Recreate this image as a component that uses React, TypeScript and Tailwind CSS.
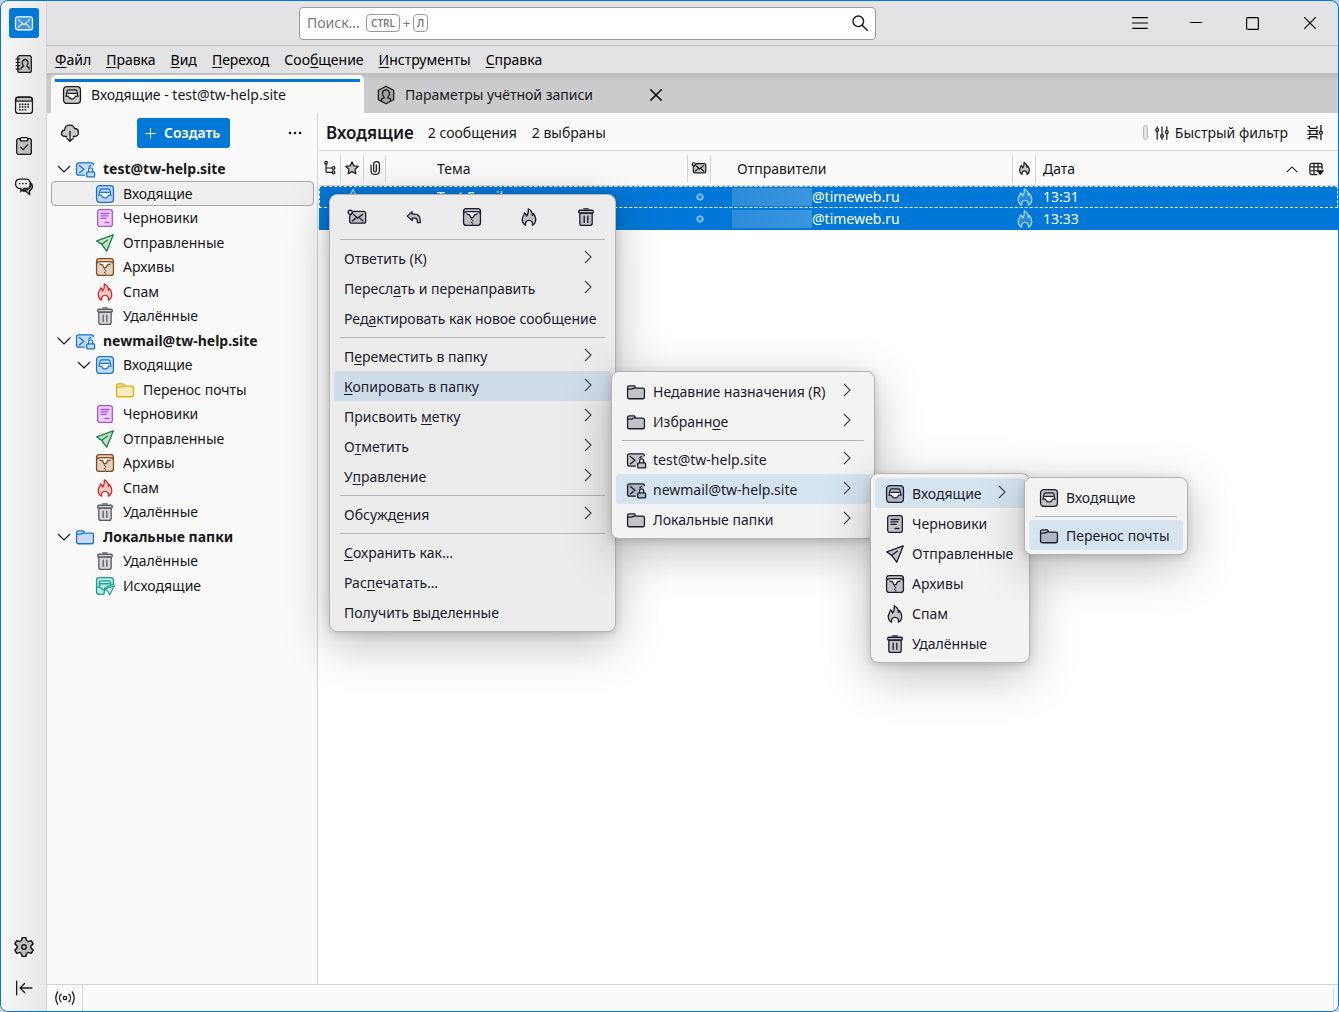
import type { ReactNode } from "react";

type IconName =
    | "inbox"
    | "drafts"
    | "sent"
    | "archive"
    | "spam"
    | "trash"
    | "folder"
    | "account"
    | "outbox"
    | "mail"
    | "unread"
    | "reply"
    | "addressBook"
    | "calendar"
    | "tasks"
    | "chat"
    | "settings"
    | "collapse"
    | "cloud"
    | "accountSettings"
    | "search"
    | "thread"
    | "star"
    | "attachment"
    | "filter"
    | "display"
    | "columns"
    | "sync";

// Shapes are drawn on a 16px grid, "tint" is the translucent body of the icon
const tint = { fill: "currentColor", fillOpacity: 0.22 };

const shapes: Record<IconName, ReactNode> = {
    inbox: (
        <>
            <rect x="0.5" y="0.5" width="15" height="15" rx="3" {...tint} />
            <path
                d="M3.5 7h9v2h-1.300c-.8 0-.9 2.300-2.200 2.300H7c-1.300 0-1.400-2.300-2.200-2.300H3.500z"
                fill="#fff"
                stroke="none"
            />
            <path
                d="M2.500 9h2c.8 0 1 2.500 2.500 2.500h2c1.500 0 1.700-2.500 2.500-2.500h2M3 8l.5-3c.1-.9.600-1.500 1.500-1.500h6c.9 0 1.400.6 1.500 1.500l.5 3M4.500 6.500h7"
                fill="none"
            />
        </>
    ),
    drafts: (
        <>
            <rect x="1.5" y="0.5" width="13" height="15" rx="2" {...tint} />
            <path d="M4.500 4h7M4.500 6.200h6M4.500 8.400h4.500M8 12h3.500" />
        </>
    ),
    sent: (
        <>
            <path
                d="M15.300.8L.7 6.200l4.500 3L9.500 15.300z"
                strokeLinejoin="round"
                {...tint}
            />
            <path d="M5.200 9.200l5-3.800" fill="none" />
        </>
    ),
    archive: (
        <>
            <rect x="0.5" y="0.5" width="15" height="15" rx="2.5" {...tint} />
            <path d="M3 4h10l-2.500 2L9 8.500H7L5.500 6z" fill="#fff" stroke="none" />
            <path
                d="M.5 5C1 3.500 2 3.200 3.500 3.200h9c1.500 0 2.500.3 3 1.800M3.500 5.500l2.300.5L7 8.500h2L10.200 6l2.300-.5"
                fill="none"
            />
            <path d="M7.500 10h.2M8.500 11.400h.2M7.500 12.800h.2M8.500 14.200h.2" />
        </>
    ),
    spam: (
        <path
            d="M5 15.300C3.200 14.300 2 12.500 2 10.200c0-2.400 1.600-3.700 2-5.900 1.200.7 1.700 1.700 1.800 2.900C7.300 5.500 7.600 2.800 7.400.7c2.700 1.300 3.600 3.500 3.600 5.900.5-.4.800-1 .9-1.800 1.300 1.500 2.100 3.500 2.100 5.400 0 2.300-1.200 4.100-3 5.100.5-2.400-.4-4.300-3-4.300s-3.500 1.900-3 4.300z"
            strokeLinejoin="round"
            {...tint}
        />
    ),
    trash: (
        <>
            <path d="M2.500 4.500v9c0 1.200.8 2 2 2h7c1.200 0 2-.8 2-2v-9z" {...tint} />
            <rect x="1.500" y="2" width="13" height="2.500" rx="1" {...tint} />
            <path d="M6 .8h4M6.400 7.300v5.500M9.600 7.300v5.500" />
        </>
    ),
    folder: (
        <>
            <path
                d="M.5 4.200c0-1.200.6-1.700 1.600-1.700h4.300l1.700 2h5.700c1.200 0 1.700.6 1.700 1.700v6c0 1.200-.6 1.800-1.700 1.800H2.200c-1.100 0-1.700-.6-1.700-1.800z"
                {...tint}
            />
            <path d="M.5 5.500H4l3-1.200" fill="none" />
        </>
    ),
    account: (
        <>
            <path
                d="M8 13.500H2.200c-1.100 0-1.700-.6-1.700-1.700V4.200c0-1.100.6-1.700 1.700-1.700h11.600c1.100 0 1.700.6 1.700 1.700V6h-3L10 8.500z"
                fill="currentColor"
                fillOpacity="0.22"
                stroke="none"
            />
            <path
                d="M7.500 13.500H2.200c-1.100 0-1.700-.6-1.700-1.700V4.200c0-1.100.6-1.700 1.700-1.700h11.600c1.100 0 1.700.6 1.700 1.700M3 4.800L7 8.300 3 11.500M13 4.800l-1.500 1.300"
                fill="none"
            />
            <rect x="9.500" y="10.500" width="7" height="4.500" rx="0.8" {...tint} />
            <path d="M11.200 10.500V8.800c0-2.300 3.600-2.300 3.600 0v1.700" fill="none" />
        </>
    ),
    outbox: (
        <>
            <path
                d="M7 15.500H3C1.500 15.500.5 14.500.5 13V3C.5 1.500 1.500.5 3 .5h10c1.500 0 2.500 1 2.500 2.500v3.500L8 9.500z"
                {...tint}
            />
            <path
                d="M3 8V5c0-1 .5-1.500 1.500-1.500h7C12.500 3.500 13 4 13 5v1.500M4 6h8M.5 9h3c.8 0 1 2.500 3.500 2.500"
                fill="none"
            />
            <path d="M16.300 7.800l-8.500 3 2.700 1.700 1.700 3.200z" fill="#fff" />
        </>
    ),
    mail: (
        <>
            <rect x="0.5" y="2.5" width="15" height="11.500" rx="1.800" {...tint} />
            <path d="M3 5l5 4.500L13 5M3 11.800L6 9M13 11.800L10 9" fill="none" />
        </>
    ),
    unread: (
        <>
            <path
                d="M5 3h9c1.100 0 1.700.6 1.700 1.700v7.100c0 1.100-.6 1.700-1.700 1.700H3.200c-1.100 0-1.700-.6-1.700-1.700V7z"
                {...tint}
            />
            <path d="M5 5.800L8.700 9 13 5.500M3.800 11.500L7 9M13.300 11.500L10.500 9" fill="none" />
            <circle cx="2" cy="3.800" r="1.800" fill="none" />
        </>
    ),
    reply: (
        <path
            d="M6.300 3.200L2 7.200l4.300 4V9h2.200C10.200 9 11 10 11 11.500V13h2.500v-2c0-3.200-1.700-5.500-5-5.500H6.300z"
            strokeLinejoin="round"
            {...tint}
        />
    ),
    addressBook: (
        <>
            <rect x="2.500" y="0.5" width="12" height="15" rx="1.800" {...tint} />
            <path d="M1 3.500h3M1 6.500h3M1 9.500h3M1 12.500h3" />
            <path
                d="M5.500 12.500v-1.200l2-1.300C5.500 7 6.500 4 9 4s3.500 3 1.500 6l2 1.300v1.200"
                fill="none"
            />
        </>
    ),
    calendar: (
        <>
            <rect x="0.5" y="1" width="15" height="14.500" rx="2.500" fill="none" />
            <path d="M.5 4.500C.5 2 1.500 1 3 1h10c1.500 0 2.500 1 2.500 3.500z" {...tint} />
            <path
                d="M3.500 7.500h9M3.500 9.800h9M3.500 12.200h6.500"
                strokeDasharray="1.5 1"
                strokeWidth="1.5"
                strokeLinecap="butt"
            />
        </>
    ),
    tasks: (
        <>
            <rect x="1.500" y="1.500" width="13" height="14" rx="1.800" {...tint} />
            <path d="M4.500 1.500l.5 2h6l.5-2-1-1h-5z" fill="#eee" />
            <path d="M5 9l2.200 2.200L11.200 7" fill="none" />
        </>
    ),
    chat: (
        <>
            <path
                d="M13.500 4c1.200.7 2 1.800 2 3.300 0 1.900-1 3.200-2.500 3.900v3.300l-3.500-2.800h-2L5 10.500h5c2.500 0 4-2 4-4z"
                {...tint}
            />
            <path
                d="M4.500 1h5c2.500 0 4 1.700 4 4s-1.500 4.300-4 4.300H8l-2.800 2.500V9.300C2 9.300.5 7.500.5 5S2 1 4.500 1z"
                fill="#f0f0f0"
            />
            <path d="M3.800 5h.5M6.700 5h.5M9.600 5h.5" />
        </>
    ),
    settings: (
        <>
            <path
                d="M6.500.5h3l.5 2.300 1.500.9 2.300-.8 1.500 2.600-1.700 1.600v1.800l1.700 1.600-1.500 2.600-2.300-.8-1.500.9-.5 2.300h-3L6 13.200l-1.500-.9-2.300.8L.7 10.500l1.700-1.600V7.100L.7 5.500l1.500-2.600 2.300.8L6 2.800z"
                strokeLinejoin="round"
                {...tint}
            />
            <circle cx="8" cy="8" r="1.800" fill="none" />
        </>
    ),
    collapse: <path d="M1.500 2v12M15 8H4.500M8.500 4l-4 4 4 4" fill="none" />,
    cloud: (
        <>
            <path
                d="M6 11H3.500c-1.700 0-3-1.200-3-2.800 0-1.600 1.100-2.700 2.700-2.800C3.400 2.800 5.300 1 7.800 1c2.200 0 3.800 1.200 4.400 3 2 0 3.300 1.500 3.300 3.500S14 11 12.500 11H10z"
                fill="currentColor"
                fillOpacity="0.22"
                stroke="none"
            />
            <path
                d="M5 11H3.500c-1.700 0-3-1.200-3-2.800 0-1.600 1.100-2.700 2.700-2.800C3.400 2.800 5.300 1 7.800 1c2.200 0 3.800 1.200 4.400 3 2 0 3.300 1.500 3.300 3.500S14 11 12.500 11H11"
                fill="none"
            />
            <path d="M8 6.500v8.800M5 12.300l3 3 3-3" fill="none" />
        </>
    ),
    accountSettings: (
        <>
            <path
                d="M8 .2l6.800 3.600v8.400L8 15.800l-6.800-3.600V3.800z"
                strokeLinejoin="round"
                {...tint}
            />
            <path
                d="M4 13v-1.500l2.500-1C3.500 7 5 3.500 8 3.500s4.500 3.500 1.500 7l2.500 1V13"
                fill="none"
            />
        </>
    ),
    search: (
        <>
            <circle cx="6.300" cy="6.300" r="5.300" fill="none" />
            <path d="M10.200 10.200l5 5" />
        </>
    ),
    thread: (
        <>
            <path d="M3.500 3.500V11c0 1.300.7 2 2 2H10M3.500 8H10" fill="none" />
            <circle cx="3.500" cy="2" r="1.500" fill="none" />
            <circle cx="12" cy="8" r="1.600" fill="none" />
            <circle cx="12" cy="13" r="1.600" fill="none" />
        </>
    ),
    star: (
        <path
            d="M8 1l2.100 4.600 5 .6-3.700 3.400 1 4.900L8 12.100l-4.400 2.400 1-4.900L.9 6.200l5-.6z"
            strokeLinejoin="round"
            {...tint}
        />
    ),
    attachment: (
        <path
            d="M9.500 4.500v6.300c0 2.300-3 2.300-3 0V3.500c0-3.700 6.500-3.700 6.500 0v7.800c0 5.300-9.500 5.300-9.500 0V5"
            fill="none"
        />
    ),
    filter: (
        <>
            <path d="M2.500 1v1.500M2.500 7v8M8 1v8.500M8 13.500V15M13.500 1v4M13.500 9v6" />
            <circle cx="2.500" cy="4.700" r="1.600" fill="none" />
            <circle cx="8" cy="11.500" r="1.600" fill="none" />
            <circle cx="13.500" cy="7" r="1.600" fill="none" />
        </>
    ),
    display: (
        <>
            <path
                d="M0 1.500h1.500v1.200c0 .5.300.8.800.8h6.400c.5 0 .8-.3.8-.8V1.500M0 14.500h1.500v-1.200c0-.5.300-.8.800-.8h6.400c.5 0 .8.300.8.8v1.200"
                fill="none"
            />
            <path d="M0 6h10.500M0 10h10.500M2 6v4M9.500 6v4M13.800.5V6M13.800 10.500V15.500" />
            <circle cx="13.800" cy="8.300" r="1.600" fill="none" />
        </>
    ),
    columns: (
        <>
            <path
                d="M9 14.500H3.500c-1.500 0-2.500-1-2.500-2.500V4c0-1.500 1-2.500 2.500-2.500h9C14 1.500 15 2.500 15 4v4M1 5.500h14M5.700 1.500v13M10.300 1.500v7.500M1 10h8"
                fill="none"
            />
            <path d="M9.500 10H16l-3.200 4z" fill="currentColor" />
        </>
    ),
    sync: (
        <>
            <circle cx="8" cy="8" r="1.500" fill="none" />
            <path
                d="M4.500 4.500c-1.800 2-1.800 5 0 7M11.500 4.500c1.800 2 1.800 5 0 7M1.500 2.500c-2 3.300-2 7.700 0 11M14.500 2.500c2 3.300 2 7.700 0 11"
                fill="none"
            />
        </>
    ),
};

const Icon = ({
    name,
    className = "size-[18px] stroke-[1.15]",
}: {
    name: IconName;
    className?: string;
}) => (
    <svg
        viewBox="0 0 16 16"
        className={`shrink-0 overflow-visible ${className}`}
        stroke="currentColor"
        strokeLinecap="round"
        aria-hidden="true"
    >
        {shapes[name]}
    </svg>
);

const Chevron = ({ className }: { className: string }) => (
    <svg
        viewBox="0 0 14 8"
        className={`h-2 w-3.5 shrink-0 ${className}`}
        fill="none"
        stroke="currentColor"
        strokeWidth="1.2"
        aria-hidden="true"
    >
        <path d="M1 1l6 6 6-6" />
    </svg>
);

// "&" stands before the letter that works as the access key
const Label = ({ text }: { text: string }) => {
    const [before, after] = text.split("&");
    if (after === undefined) return <span>{before}</span>;
    return (
        <span className="underline-offset-2">
            {before}
            <u>{after[0]}</u>
            {after.slice(1)}
        </span>
    );
};

const menuBar = [
    "&Файл",
    "&Правка",
    "&Вид",
    "&Переход",
    "Соо&бщение",
    "&Инструменты",
    "&Справка",
];

const spaces: { icon: IconName; name: string }[] = [
    { icon: "mail", name: "Почта" },
    { icon: "addressBook", name: "Адресная книга" },
    { icon: "calendar", name: "Календарь" },
    { icon: "tasks", name: "Задачи" },
    { icon: "chat", name: "Чат" },
];

const SpacesBar = () => (
    <nav className="flex w-[46px] shrink-0 flex-col items-center justify-between border-r border-[#d4d4d8] bg-linear-to-r from-[#f6f6f6] to-[#e8e8e8] pt-[7px] pb-2">
        <div className="flex flex-col gap-[11px]">
            {spaces.map((space, i) => (
                <button
                    key={space.name}
                    aria-label={space.name}
                    className={`flex size-[30px] items-center justify-center rounded-[3px] ${
                        i === 0 ? "bg-[#0078d7] text-white" : "text-[#18181b]"
                    }`}
                >
                    <Icon name={space.icon} />
                </button>
            ))}
        </div>
        <div className="flex flex-col gap-[11px] text-[#18181b]">
            <button
                aria-label="Настройки"
                className="flex size-[30px] items-center justify-center"
            >
                <Icon name="settings" className="size-5 stroke-[1.15]" />
            </button>
            <button
                aria-label="Свернуть панель"
                className="flex size-[30px] items-center justify-center"
            >
                <Icon name="collapse" />
            </button>
        </div>
    </nav>
);

const TitleBar = () => (
    <header className="flex h-[45px] shrink-0 border-b border-[#c2c2c6]">
        <div className="flex flex-1 items-center justify-center">
            <div className="flex h-[33px] w-[577px] items-center rounded-[4px] border border-[#9a9a9e] bg-white px-[7px] text-[#7a7a7e]">
                <input
                    type="text"
                    aria-label="Поиск"
                    placeholder="Поиск..."
                    className="w-[59px] outline-none placeholder:text-[#7a7a7e]"
                />
                <kbd className="flex h-[18px] w-[34px] items-center justify-center rounded-[4px] border border-[#9a9a9e] font-[inherit] text-[10px] font-semibold">
                    CTRL
                </kbd>
                <span className="w-[13px] text-center text-[13px]">+</span>
                <kbd className="flex h-[18px] w-[15px] items-center justify-center rounded-[4px] border border-[#9a9a9e] font-[inherit] text-[10px] font-semibold">
                    Л
                </kbd>
                <button aria-label="Найти" className="ml-auto text-[#18181b]">
                    <Icon name="search" className="size-4 stroke-[1.4]" />
                </button>
            </div>
        </div>
        <div className="flex items-center text-black">
            <button
                aria-label="Меню"
                className="mr-[15px] flex size-6 items-center justify-center"
            >
                <svg
                    viewBox="0 0 16 12"
                    className="h-3 w-4"
                    stroke="currentColor"
                    strokeWidth="1.2"
                >
                    <path d="M0 .6h16M0 6h16M0 11.400h16" />
                </svg>
            </button>
            <button
                aria-label="Свернуть"
                className="flex h-full w-[57px] items-center justify-center"
            >
                <svg viewBox="0 0 12 12" className="size-3" stroke="currentColor">
                    <path d="M0 5.500h12" />
                </svg>
            </button>
            <button
                aria-label="Развернуть"
                className="flex h-full w-[57px] items-center justify-center"
            >
                <svg
                    viewBox="0 0 13 13"
                    className="size-[13px]"
                    stroke="currentColor"
                    strokeWidth="1.2"
                >
                    <rect x="0.6" y="0.6" width="11.800" height="11.800" rx="1" fill="none" />
                </svg>
            </button>
            <button
                aria-label="Закрыть"
                className="flex h-full w-[57px] items-center justify-center"
            >
                <svg
                    viewBox="0 0 12 12"
                    className="size-3"
                    stroke="currentColor"
                    strokeWidth="1.2"
                >
                    <path d="M0 0l12 12M12 0L0 12" />
                </svg>
            </button>
        </div>
    </header>
);

const TabBar = () => (
    <div className="flex h-10 shrink-0 items-end bg-linear-to-b from-[#bdbdc0] via-[#cbcbcd] via-20% to-[#cbcbcd] pl-1">
        <button className="flex h-[38px] w-[313px] flex-col rounded-t-[5px] bg-[#fafafa] px-1 pt-1">
            <span className="h-[3px] w-full bg-[#0078d7]" />
            <span className="flex flex-1 items-center gap-2.5 pb-1.5 pl-2 text-[#18181b]">
                <Icon name="inbox" />
                Входящие - test@tw-help.site
            </span>
        </button>
        <div className="flex h-[38px] w-[313px] items-center gap-2.5 pt-px pl-[13px] text-[#18181b]">
            <Icon name="accountSettings" />
            <button>Параметры учётной записи</button>
            <button aria-label="Закрыть вкладку" className="mr-[15px] ml-auto">
                <svg
                    viewBox="0 0 12 12"
                    className="size-3"
                    stroke="currentColor"
                    strokeWidth="1.6"
                >
                    <path d="M0 0l12 12M12 0L0 12" />
                </svg>
            </button>
        </div>
    </div>
);

interface FolderProps {
    name: string;
    icon: IconName;
    color: string;
    level?: number;
    open?: boolean;
    selected?: boolean;
}

const folders: FolderProps[] = [
    { name: "test@tw-help.site", icon: "account", color: "text-[#1373d9]", level: 0, open: true },
    { name: "Входящие", icon: "inbox", color: "text-[#1373d9]", selected: true },
    { name: "Черновики", icon: "drafts", color: "text-[#b44ae8]" },
    { name: "Отправленные", icon: "sent", color: "text-[#16803c]" },
    { name: "Архивы", icon: "archive", color: "text-[#8a4b16]" },
    { name: "Спам", icon: "spam", color: "text-[#dc2626]" },
    { name: "Удалённые", icon: "trash", color: "text-[#5b5b66]" },
    { name: "newmail@tw-help.site", icon: "account", color: "text-[#1373d9]", level: 0, open: true },
    { name: "Входящие", icon: "inbox", color: "text-[#1373d9]", open: true },
    { name: "Перенос почты", icon: "folder", color: "text-[#e0b000]", level: 2 },
    { name: "Черновики", icon: "drafts", color: "text-[#b44ae8]" },
    { name: "Отправленные", icon: "sent", color: "text-[#16803c]" },
    { name: "Архивы", icon: "archive", color: "text-[#8a4b16]" },
    { name: "Спам", icon: "spam", color: "text-[#dc2626]" },
    { name: "Удалённые", icon: "trash", color: "text-[#5b5b66]" },
    { name: "Локальные папки", icon: "folder", color: "text-[#1373d9]", level: 0, open: true },
    { name: "Удалённые", icon: "trash", color: "text-[#5b5b66]" },
    { name: "Исходящие", icon: "outbox", color: "text-[#12a594]" },
];

const indents = ["pl-[5px]", "pl-[25px]", "pl-[45px]"];

const FolderRow = ({ name, icon, color, level = 1, open, selected }: FolderProps) => (
    <li
        className={`flex h-6 items-center rounded-[4px] border even:h-[25px] ${indents[level]} ${
            selected ? "border-[#a8a8ac] bg-[#efefef]" : "border-transparent"
        } ${level === 0 ? "font-bold" : ""}`}
    >
        <span className="w-[19px] shrink-0">
            {open && <Chevron className="text-[#18181b]" />}
        </span>
        <span className={`flex ${color}`}>
            <Icon name={icon} />
        </span>
        <span className="pl-[9px] whitespace-nowrap">{name}</span>
    </li>
);

const FolderPane = () => (
    <aside className="flex w-[271px] shrink-0 flex-col border-r border-[#d4d4d8] bg-[#fafafa] pr-[3px] pl-1 text-[#18181b]">
        <div className="flex h-10 items-center justify-between pr-3 pl-2.5">
            <button aria-label="Получить почту">
                <Icon name="cloud" />
            </button>
            <button className="flex h-[30px] w-[93px] items-center gap-2 rounded-[3px] bg-[#0078d7] pl-2 font-semibold text-white">
                <svg viewBox="0 0 11 11" className="size-[11px]" stroke="currentColor">
                    <path d="M5.500 0v11M0 5.500h11" />
                </svg>
                Создать
            </button>
            <button aria-label="Параметры панели папок">
                <svg viewBox="0 0 14 4" className="h-1 w-3.5" fill="currentColor">
                    <circle cx="2" cy="2" r="1.300" />
                    <circle cx="7" cy="2" r="1.300" />
                    <circle cx="12" cy="2" r="1.300" />
                </svg>
            </button>
        </div>
        <ul className="mt-1">
            {folders.map((folder, i) => (
                <FolderRow key={i} {...folder} />
            ))}
        </ul>
    </aside>
);

const HeadCell = ({ children, className = "" }: { children: ReactNode; className?: string }) => (
    <div
        className={`flex h-[27px] items-center border-r border-[#d4d4d8] ${className}`}
    >
        {children}
    </div>
);

const messages = [
    { subject: "Test Email", sender: "@timeweb.ru", time: "13:31", focused: true },
    { subject: "", sender: "@timeweb.ru", time: "13:33", focused: false },
];

const MessageList = () => (
    <section className="min-w-0 flex-1 bg-white pl-px text-[#18181b]">
        <div className="flex h-[38px] items-center border-b border-[#d4d4d8] bg-[#fafafa] pt-0.5 pr-[15px] pl-[7px]">
            <h1 className="text-[17px] font-semibold">Входящие</h1>
            <span className="pl-3.5">2 сообщения</span>
            <span className="pl-[15px]">2 выбраны</span>
            <span className="mr-[7px] ml-auto h-[15px] w-[5px] rounded-[3px] border border-[#bdbdc0] bg-[#e3e3e5]" />
            <button className="flex items-center gap-1.5">
                <Icon name="filter" className="size-3.5 stroke-[1.4]" />
                Быстрый фильтр
            </button>
            <button aria-label="Вид списка сообщений" className="ml-5">
                <Icon name="display" className="size-[15px] stroke-[1.4]" />
            </button>
        </div>
        <table className="w-full table-fixed border-separate border-spacing-0">
            <colgroup>
                <col className="w-[22px]" />
                <col className="w-[23px]" />
                <col className="w-[22px]" />
                <col />
                <col className="w-[23px]" />
                <col />
                <col className="w-[23px]" />
                <col />
            </colgroup>
            <thead>
                <tr className="h-[35px] bg-[#fafafa] text-left *:border-b *:border-[#d4d4d8] *:p-0 *:font-normal">
                    <th aria-label="Обсуждение">
                        <HeadCell className="justify-center">
                            <Icon name="thread" className="size-3.5 stroke-[1.4]" />
                        </HeadCell>
                    </th>
                    <th aria-label="Отмечено">
                        <HeadCell className="justify-center">
                            <Icon name="star" className="size-3.5 stroke-[1.4]" />
                        </HeadCell>
                    </th>
                    <th aria-label="Вложения">
                        <HeadCell className="justify-center">
                            <Icon name="attachment" className="size-3.5 stroke-[1.4]" />
                        </HeadCell>
                    </th>
                    <th>
                        <HeadCell className="pt-0.5 pl-[51px]">Тема</HeadCell>
                    </th>
                    <th aria-label="Прочитано">
                        <HeadCell className="justify-center">
                            <Icon name="unread" className="size-3.5 stroke-[1.4]" />
                        </HeadCell>
                    </th>
                    <th>
                        <HeadCell className="pt-0.5 pl-[26px]">Отправители</HeadCell>
                    </th>
                    <th aria-label="Спам">
                        <HeadCell className="justify-center">
                            <Icon name="spam" className="size-[13px] stroke-[1.5]" />
                        </HeadCell>
                    </th>
                    <th>
                        <div className="flex items-center pt-0.5 pr-[15px] pl-[7px]">
                            Дата
                            <Chevron className="mr-2.5 ml-auto h-[7px] w-3 rotate-180" />
                            <button aria-label="Выбрать столбцы">
                                <Icon name="columns" className="size-3.5 stroke-[1.4]" />
                            </button>
                        </div>
                    </th>
                </tr>
            </thead>
            <tbody>
                {messages.map((message) => (
                    <tr
                        key={message.time}
                        className={`h-[22px] bg-[#0078d7] leading-[22px] text-white *:p-0 ${
                            message.focused
                                ? "outline outline-dashed -outline-offset-1 outline-white"
                                : ""
                        }`}
                    >
                        <td />
                        <td className="text-[#a6d2f5]">
                            <Icon name="star" className="mx-auto size-[18px]" />
                        </td>
                        <td />
                        <td>
                            <span className="pl-[51px]">{message.subject}</span>
                        </td>
                        <td>
                            <svg
                                viewBox="0 0 8 8"
                                className="mx-auto size-2"
                                fill="#2f8fe0"
                                stroke="#a6d2f5"
                                strokeWidth="1.2"
                            >
                                <circle cx="4" cy="4" r="3" />
                            </svg>
                        </td>
                        <td>
                            <div className="flex items-center pl-[21px]">
                                <span className="h-[18px] w-20 bg-linear-to-r from-[#2c8cdb] to-[#3a95df]" />
                                {message.sender}
                            </div>
                        </td>
                        <td className="text-[#a6d2f5]">
                            <Icon
                                name="spam"
                                className="mx-auto size-[18px] fill-white stroke-[1.15]"
                            />
                        </td>
                        <td>
                            <span className="pl-[7px]">{message.time}</span>
                        </td>
                    </tr>
                ))}
            </tbody>
        </table>
    </section>
);

interface MenuEntry {
    label: string;
    icon?: IconName;
    submenu?: boolean;
    active?: boolean;
}

const contextMenu: (MenuEntry | null)[] = [
    { label: "Ответить (К)", submenu: true },
    { label: "Пересл&ать и перенаправить", submenu: true },
    { label: "Ред&актировать как новое сообщение" },
    null,
    { label: "П&ереместить в папку", submenu: true },
    { label: "&Копировать в папку", submenu: true, active: true },
    { label: "Присвоить &метку", submenu: true },
    { label: "О&тметить", submenu: true },
    { label: "У&правление", submenu: true },
    null,
    { label: "Обсужд&ения", submenu: true },
    null,
    { label: "&Сохранить как…" },
    { label: "Рас&печатать…" },
    { label: "Получить &выделенные" },
];

const copyMenu: (MenuEntry | null)[] = [
    { label: "Недавние назначения (R)", icon: "folder", submenu: true },
    { label: "Избранн&ое", icon: "folder", submenu: true },
    null,
    { label: "test@tw-help.site", icon: "account", submenu: true },
    { label: "newmail@tw-help.site", icon: "account", submenu: true, active: true },
    { label: "Локальные папки", icon: "folder", submenu: true },
];

const accountMenu: (MenuEntry | null)[] = [
    { label: "Входящие", icon: "inbox", submenu: true, active: true },
    { label: "Черновики", icon: "drafts" },
    { label: "Отправленные", icon: "sent" },
    { label: "Архивы", icon: "archive" },
    { label: "Спам", icon: "spam" },
    { label: "Удалённые", icon: "trash" },
];

const inboxMenu: (MenuEntry | null)[] = [
    { label: "Входящие", icon: "inbox" },
    null,
    { label: "Перенос почты", icon: "folder", active: true },
];

const quickActions: { icon: IconName; name: string }[] = [
    { icon: "unread", name: "Отметить непрочитанным" },
    { icon: "reply", name: "Ответить" },
    { icon: "archive", name: "Архивировать" },
    { icon: "spam", name: "Спам" },
    { icon: "trash", name: "Удалить" },
];

const Separator = () => <div className="mx-1.5 mt-1 mb-[3px] h-px bg-[#b4b4b8]" />;

interface MenuProps {
    entries: (MenuEntry | null)[];
    className: string;
    activeClass?: string;
    itemClass?: string;
    children?: ReactNode;
}

const Menu = ({
    entries,
    className,
    activeClass = "bg-[#d6e4ef]",
    itemClass = "pr-4 pl-[11px]",
    children,
}: MenuProps) => (
    <div
        role="menu"
        className={`absolute rounded-lg border border-[#b4b4b8] p-1 text-[#1c1b2e] shadow-[0_12px_48px_rgba(0,0,0,0.26),0_2px_8px_rgba(0,0,0,0.16)] ${className}`}
    >
        {children}
        {entries.map((entry, i) =>
            entry === null ? (
                <Separator key={i} />
            ) : (
                <button
                    key={i}
                    role="menuitem"
                    className={`flex h-[30px] w-full items-center rounded-[3px] pt-0.5 whitespace-nowrap ${itemClass} ${
                        entry.active ? activeClass : ""
                    }`}
                >
                    {entry.icon && (
                        <span className="mr-2 flex">
                            <Icon name={entry.icon} />
                        </span>
                    )}
                    <Label text={entry.label} />
                    {entry.submenu && (
                        <Chevron className="mb-1 ml-auto -rotate-90 text-[#4a4a52]" />
                    )}
                </button>
            )
        )}
    </div>
);

const App = () => {
    return (
        <div className="min-h-screen bg-[#c9d3e0] font-['Noto_Sans','Open_Sans',sans-serif] text-[14px] leading-5">
            <div className="relative flex min-h-screen overflow-hidden rounded-lg border border-[#0078d7] bg-[#e3e3e5]">
                <SpacesBar />
                <div className="flex min-w-0 flex-1 flex-col">
                    <TitleBar />
                    <nav className="flex h-[27px] shrink-0 items-center gap-[15px] pl-2 text-black">
                        {menuBar.map((item) => (
                            <button key={item}>
                                <Label text={item} />
                            </button>
                        ))}
                    </nav>
                    <TabBar />
                    <main className="flex flex-1">
                        <FolderPane />
                        <MessageList />
                    </main>
                    <footer className="flex h-[27px] shrink-0 justify-between border-t border-[#d4d4d8] bg-[#fafafa] pr-1 text-[#18181b]">
                        <div className="flex w-9 items-center justify-center border-r border-[#d4d4d8]">
                            <Icon name="sync" />
                        </div>
                        <span className="mt-1 w-px bg-[#d4d4d8]" />
                    </footer>
                </div>

                <Menu
                    entries={contextMenu}
                    className="top-[193px] left-[328px] w-[287px] bg-[#ececec]"
                    activeClass="bg-[#d0dde8]"
                    itemClass="pr-4 pl-2.5"
                >
                    <div className="flex h-9 items-center justify-between pr-4 pl-3.5">
                        {quickActions.map((action) => (
                            <button key={action.name} aria-label={action.name}>
                                <Icon name={action.icon} />
                            </button>
                        ))}
                    </div>
                    <Separator />
                </Menu>
                <Menu
                    entries={copyMenu}
                    className="top-[370px] left-[610px] w-[264px] bg-[#f3f3f3]"
                />
                <Menu
                    entries={accountMenu}
                    className="top-[472px] left-[869px] w-[160px] bg-[#f3f3f3]"
                />
                <Menu
                    entries={inboxMenu}
                    className="top-[476px] left-[1023px] w-[164px] bg-[#f3f3f3]"
                />
            </div>
        </div>
    );
};

export default App;
